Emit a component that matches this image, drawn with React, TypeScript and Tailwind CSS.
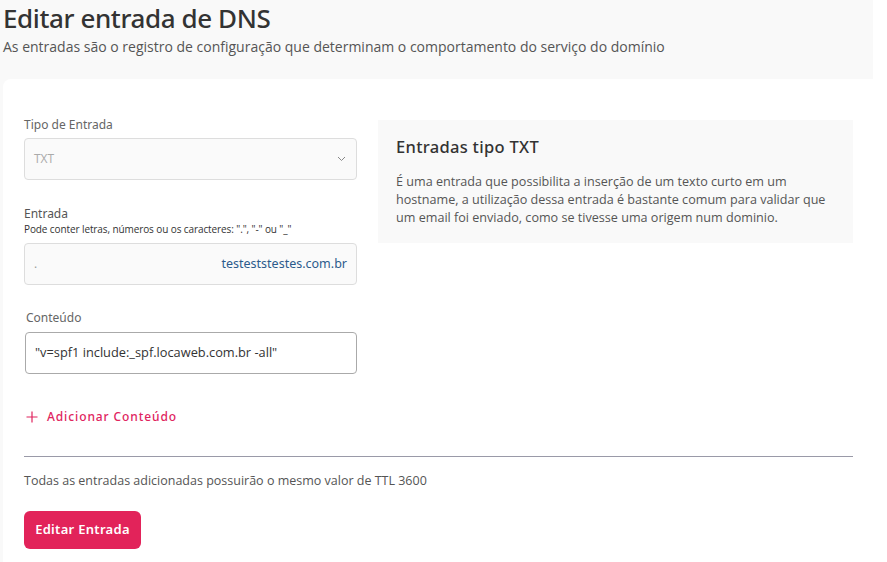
import React from 'react';

const sans = { fontFamily: '"Open Sans", "Noto Sans", sans-serif' };

export default function App() {
  return (
    <div className="min-h-screen bg-white" style={sans}>
      <div className="w-[873px] bg-[#f9f9f9]">
        <div className="px-[3px] pt-[2px] h-[79px]">
          <h1 className="text-[26px] leading-[32px] text-[#333] font-medium font-['Noto_Sans',sans-serif] tracking-[-0.4px]">
            Editar entrada de DNS
          </h1>
          <p className="text-[14px] leading-[20px] text-[#555] mt-[3px]">
            As entradas são o registro de configuração que determinam o comportamento do serviço do domínio
          </p>
        </div>
        <div className="ml-[3px] bg-white rounded-tl-[8px] pl-[21px] pr-[20px] pt-[38px] pb-[14px]">
          <div className="flex gap-[21px]">
            <div className="w-[333px] shrink-0">
              <label className="block text-[12px] leading-[16px] text-[#666] font-['Noto_Sans',sans-serif]">
                Tipo de Entrada
              </label>
              <div className="mt-[5px] h-[42px] rounded-[4px] border border-[#ddd] bg-[#fafafa] flex items-center justify-between pl-[9px] pr-[10px]">
                <span className="text-[12px] text-[#aaa]">TXT</span>
                <svg width="9" height="6" viewBox="0 0 9 6" fill="none" stroke="#888" strokeWidth="1">
                  <path d="M1 1l3.5 3.5L8 1" />
                </svg>
              </div>

              <label className="block mt-[26px] text-[12px] leading-[16px] text-[#555] font-['Noto_Sans',sans-serif]">
                Entrada
              </label>
              <p className="text-[10px] leading-[14px] text-[#333] tracking-[-0.1px]">
                Pode conter letras, números ou os caracteres: ".", "-" ou "_"
              </p>
              <div className="mt-[7px] h-[42px] rounded-[4px] border border-[#ddd] bg-[#fafafa] flex items-center justify-between pl-[9px] pr-[9px]">
                <span className="text-[12px] text-[#999]">.</span>
                <span className="text-[12.5px] text-[#2c5b8c] font-['Noto_Sans',sans-serif]">testeststestes.com.br</span>
              </div>

              <label className="block mt-[25px] ml-[2px] text-[12px] leading-[16px] text-[#666] font-['Noto_Sans',sans-serif]">
                Conteúdo
              </label>
              <div className="mt-[6px] ml-[1px] h-[42px] rounded-[4px] border border-[#aaa] bg-white flex items-center pl-[9px]">
                <span className="text-[12.8px] text-[#333]">"v=spf1 include:_spf.locaweb.com.br -all"</span>
              </div>

              <button className="mt-[34px] ml-[2px] flex items-center gap-[9px] text-[#e0245e]">
                <svg width="12" height="12" viewBox="0 0 12 12" stroke="#e0245e" strokeWidth="1.2">
                  <path d="M6 0.5v11M0.5 6h11" />
                </svg>
                <span className="text-[12px] tracking-[0.9px] font-medium font-['Noto_Sans',sans-serif]">
                  Adicionar Conteúdo
                </span>
              </button>
            </div>

            <div className="flex-1 self-start mt-[3px] bg-[#f9f9f9] h-[123px] pl-[18px] pr-[14px] pt-[15px]">
              <h2 className="text-[16.5px] leading-[24px] text-[#333] font-medium font-['Noto_Sans',sans-serif] tracking-[0.3px]">
                Entradas tipo TXT
              </h2>
              <p className="mt-[14px] text-[12.6px] leading-[18px] text-[#555]">
                É uma entrada que possibilita a inserção de um texto curto em um hostname, a utilização dessa entrada é bastante comum para validar que um email foi enviado, como se tivesse uma origem num dominio.
              </p>
            </div>
          </div>

          <div className="mt-[30px] h-px bg-[#9a9aa8]" />
          <p className="mt-[16px] text-[12.5px] leading-[16px] text-[#555]">
            Todas as entradas adicionadas possuirão o mesmo valor de TTL 3600
          </p>
          <button className="mt-[22px] h-[38px] w-[117px] rounded-[6px] bg-[#e2235a] text-white text-[13px] font-semibold tracking-[0.3px] font-['Noto_Sans',sans-serif]">
            Editar Entrada
          </button>
        </div>
      </div>
    </div>
  );
}
